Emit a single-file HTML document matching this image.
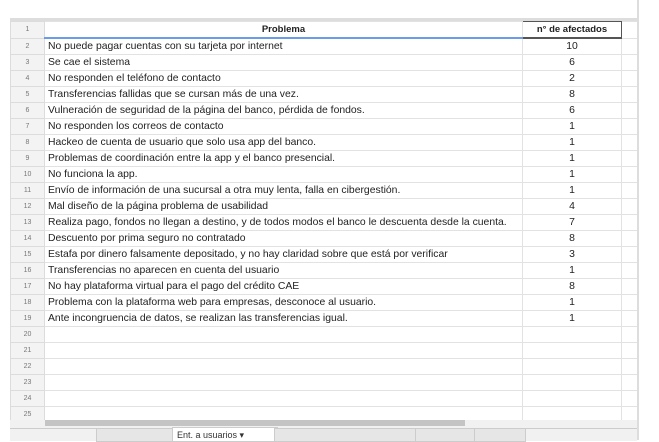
<html><head><style>
body{margin:0;width:659px;height:440px;background:#fff;position:relative;overflow:hidden;font-family:"Liberation Sans",Arial,sans-serif;}
.g{position:absolute;left:10px;top:18px;}
table{border-collapse:collapse;table-layout:fixed;}
td{height:15px;border:1px solid #e2e2e2;font-size:10.4px;color:#222;padding:0 3px;white-space:nowrap;overflow:hidden;line-height:15px;}
td.n{width:27px;background:#f3f3f3;color:#777;font-size:7px;text-align:center;border-color:#dcdcdc;}
td.p{width:471px;}
td.c{width:92px;text-align:center;}
td.e{width:10px;}
tr.h td{font-weight:bold;text-align:center;font-size:9.5px;}
</style></head><body>
<div style="position:absolute;left:10px;top:18px;width:627px;height:3px;background:#ddd"></div>
<div class="g" style="top:21px">
<table>
<tr class="h"><td class="n" style="font-weight:normal;font-size:7px">1</td><td class="p" style="border-bottom:2px solid #6c9be8">Problema</td><td class="c" style="border:1px solid #555;border-bottom:2px solid #555">n° de afectados</td><td class="e"></td></tr>
<tr><td class="n">2</td><td class="p">No puede pagar cuentas con su tarjeta por internet</td><td class="c">10</td><td class="e"></td></tr>
<tr><td class="n">3</td><td class="p">Se cae el sistema</td><td class="c">6</td><td class="e"></td></tr>
<tr><td class="n">4</td><td class="p">No responden el teléfono de contacto</td><td class="c">2</td><td class="e"></td></tr>
<tr><td class="n">5</td><td class="p">Transferencias fallidas que se cursan más de una vez.</td><td class="c">8</td><td class="e"></td></tr>
<tr><td class="n">6</td><td class="p">Vulneración de seguridad de la página del banco, pérdida de fondos.</td><td class="c">6</td><td class="e"></td></tr>
<tr><td class="n">7</td><td class="p">No responden los correos de contacto</td><td class="c">1</td><td class="e"></td></tr>
<tr><td class="n">8</td><td class="p">Hackeo de cuenta de usuario que solo usa app del banco.</td><td class="c">1</td><td class="e"></td></tr>
<tr><td class="n">9</td><td class="p">Problemas de coordinación entre la app y el banco presencial.</td><td class="c">1</td><td class="e"></td></tr>
<tr><td class="n">10</td><td class="p">No funciona la app.</td><td class="c">1</td><td class="e"></td></tr>
<tr><td class="n">11</td><td class="p">Envío de información de una sucursal a otra muy lenta, falla en cibergestión.</td><td class="c">1</td><td class="e"></td></tr>
<tr><td class="n">12</td><td class="p">Mal diseño de la página problema de usabilidad</td><td class="c">4</td><td class="e"></td></tr>
<tr><td class="n">13</td><td class="p">Realiza pago, fondos no llegan a destino, y de todos modos el banco le descuenta desde la cuenta.</td><td class="c">7</td><td class="e"></td></tr>
<tr><td class="n">14</td><td class="p">Descuento por prima seguro no contratado</td><td class="c">8</td><td class="e"></td></tr>
<tr><td class="n">15</td><td class="p">Estafa por dinero falsamente depositado, y no hay claridad sobre que está por verificar</td><td class="c">3</td><td class="e"></td></tr>
<tr><td class="n">16</td><td class="p">Transferencias no aparecen en cuenta del usuario</td><td class="c">1</td><td class="e"></td></tr>
<tr><td class="n">17</td><td class="p">No hay plataforma virtual para el pago del crédito CAE</td><td class="c">8</td><td class="e"></td></tr>
<tr><td class="n">18</td><td class="p">Problema con la plataforma web para empresas, desconoce al usuario.</td><td class="c">1</td><td class="e"></td></tr>
<tr><td class="n">19</td><td class="p">Ante incongruencia de datos, se realizan las transferencias igual.</td><td class="c">1</td><td class="e"></td></tr>
<tr><td class="n">20</td><td class="p"></td><td class="c"></td><td class="e"></td></tr>
<tr><td class="n">21</td><td class="p"></td><td class="c"></td><td class="e"></td></tr>
<tr><td class="n">22</td><td class="p"></td><td class="c"></td><td class="e"></td></tr>
<tr><td class="n">23</td><td class="p"></td><td class="c"></td><td class="e"></td></tr>
<tr><td class="n">24</td><td class="p"></td><td class="c"></td><td class="e"></td></tr>
<tr><td class="n">25</td><td class="p"></td><td class="c"></td><td class="e"></td></tr>
</table></div>
<div style="position:absolute;left:637px;top:0;width:2px;height:440px;background:#ddd"></div>
<div style="position:absolute;left:10px;top:420px;width:627px;height:8px;background:#f1f1f1"></div>
<div style="position:absolute;left:45px;top:420px;width:420px;height:6px;background:#c4c4c4"></div>
<div style="position:absolute;left:10px;top:428px;width:627px;height:12px;background:#f1f1f1;border-top:1px solid #ccc"></div>
<div style="position:absolute;left:96px;top:428px;width:76px;height:12px;background:#e6e6e6;border:1px solid #ccc"></div>
<div style="position:absolute;left:172px;top:427px;width:100px;height:13px;background:#fff;border:1px solid #ccc;font-size:9px;color:#333;padding-left:4px;line-height:14px">Ent. a usuarios ▾</div>
<div style="position:absolute;left:274px;top:428px;width:140px;height:12px;background:#e6e6e6;border:1px solid #ccc"></div>
<div style="position:absolute;left:415px;top:428px;width:58px;height:12px;background:#e6e6e6;border:1px solid #ccc"></div>
<div style="position:absolute;left:474px;top:428px;width:50px;height:12px;background:#e6e6e6;border:1px solid #ccc"></div>
</body></html>
